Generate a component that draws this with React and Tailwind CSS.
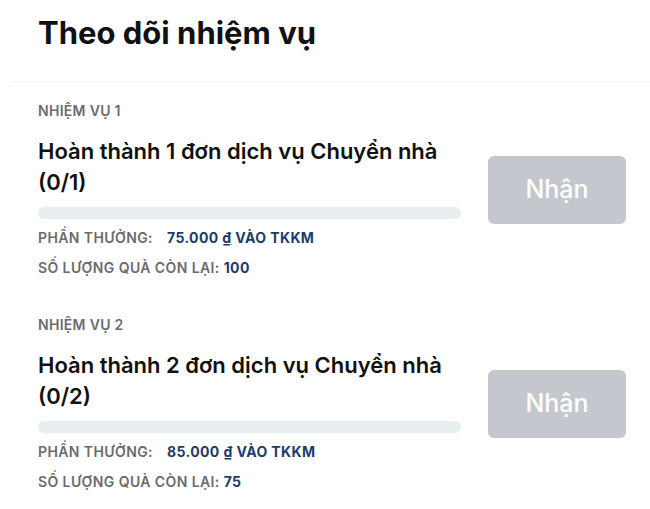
export default function App() {
  const tasks = [
    { label: "NHIỆM VỤ 1", title: "Hoàn thành 1 đơn dịch vụ Chuyển nhà", prog: "(0/1)", reward: "75.000", left: "100" },
    { label: "NHIỆM VỤ 2", title: "Hoàn thành 2 đơn dịch vụ Chuyển nhà", prog: "(0/2)", reward: "85.000", left: "75" },
  ];
  return (
    <div className="w-[650px] h-[509px] bg-white overflow-hidden" style={{ fontFamily: "Inter, 'Noto Sans', sans-serif" }}>
      <div className="pl-[38px] pt-[13px] pb-[28px]">
        <h1 className="text-[31px] leading-[40px] font-bold text-[#111111]">Theo dõi nhiệm vụ</h1>
      </div>
      <div className="ml-[12px] border-t border-[#f1f1f1]"></div>
      <div className="pt-[19px] pl-[38px] pr-[24px] flex flex-col gap-[37px]">
        {tasks.map((t) => (
          <div key={t.label} className="flex items-center">
            <div className="w-[423px] flex flex-col">
              <div className="text-[14px] leading-[20px] font-semibold text-[#6b6b6b] tracking-[0.3px]">{t.label}</div>
              <div className="mt-[15px] text-[22px] leading-[31px] font-semibold text-[#111111]">
                {t.title}
                <br />
                {t.prog}
              </div>
              <div className="mt-[9px] h-[12px] rounded-full bg-[#e9eef0]"></div>
              <div className="mt-[9px] text-[14px] leading-[20px] font-semibold text-[#6b6b6b] tracking-[0.4px] flex">
                <span>PHẦN THƯỞNG:</span>
                <span className="ml-[14px] text-[#1d3c6a] font-bold">
                  {t.reward} <span className="underline">₫</span> VÀO TKKM
                </span>
              </div>
              <div className="mt-[10px] text-[14px] leading-[20px] font-semibold text-[#6b6b6b] tracking-[0.4px]">
                SỐ LƯỢNG QUÀ CÒN LẠI: <span className="text-[#1d3c6a] font-bold">{t.left}</span>
              </div>
            </div>
            <div className="ml-[27px] w-[138px] h-[68px] rounded-[6px] bg-[#c4c7cd] flex items-center justify-center text-white text-[25px] font-medium">
              Nhận
            </div>
          </div>
        ))}
      </div>
    </div>
  );
}
